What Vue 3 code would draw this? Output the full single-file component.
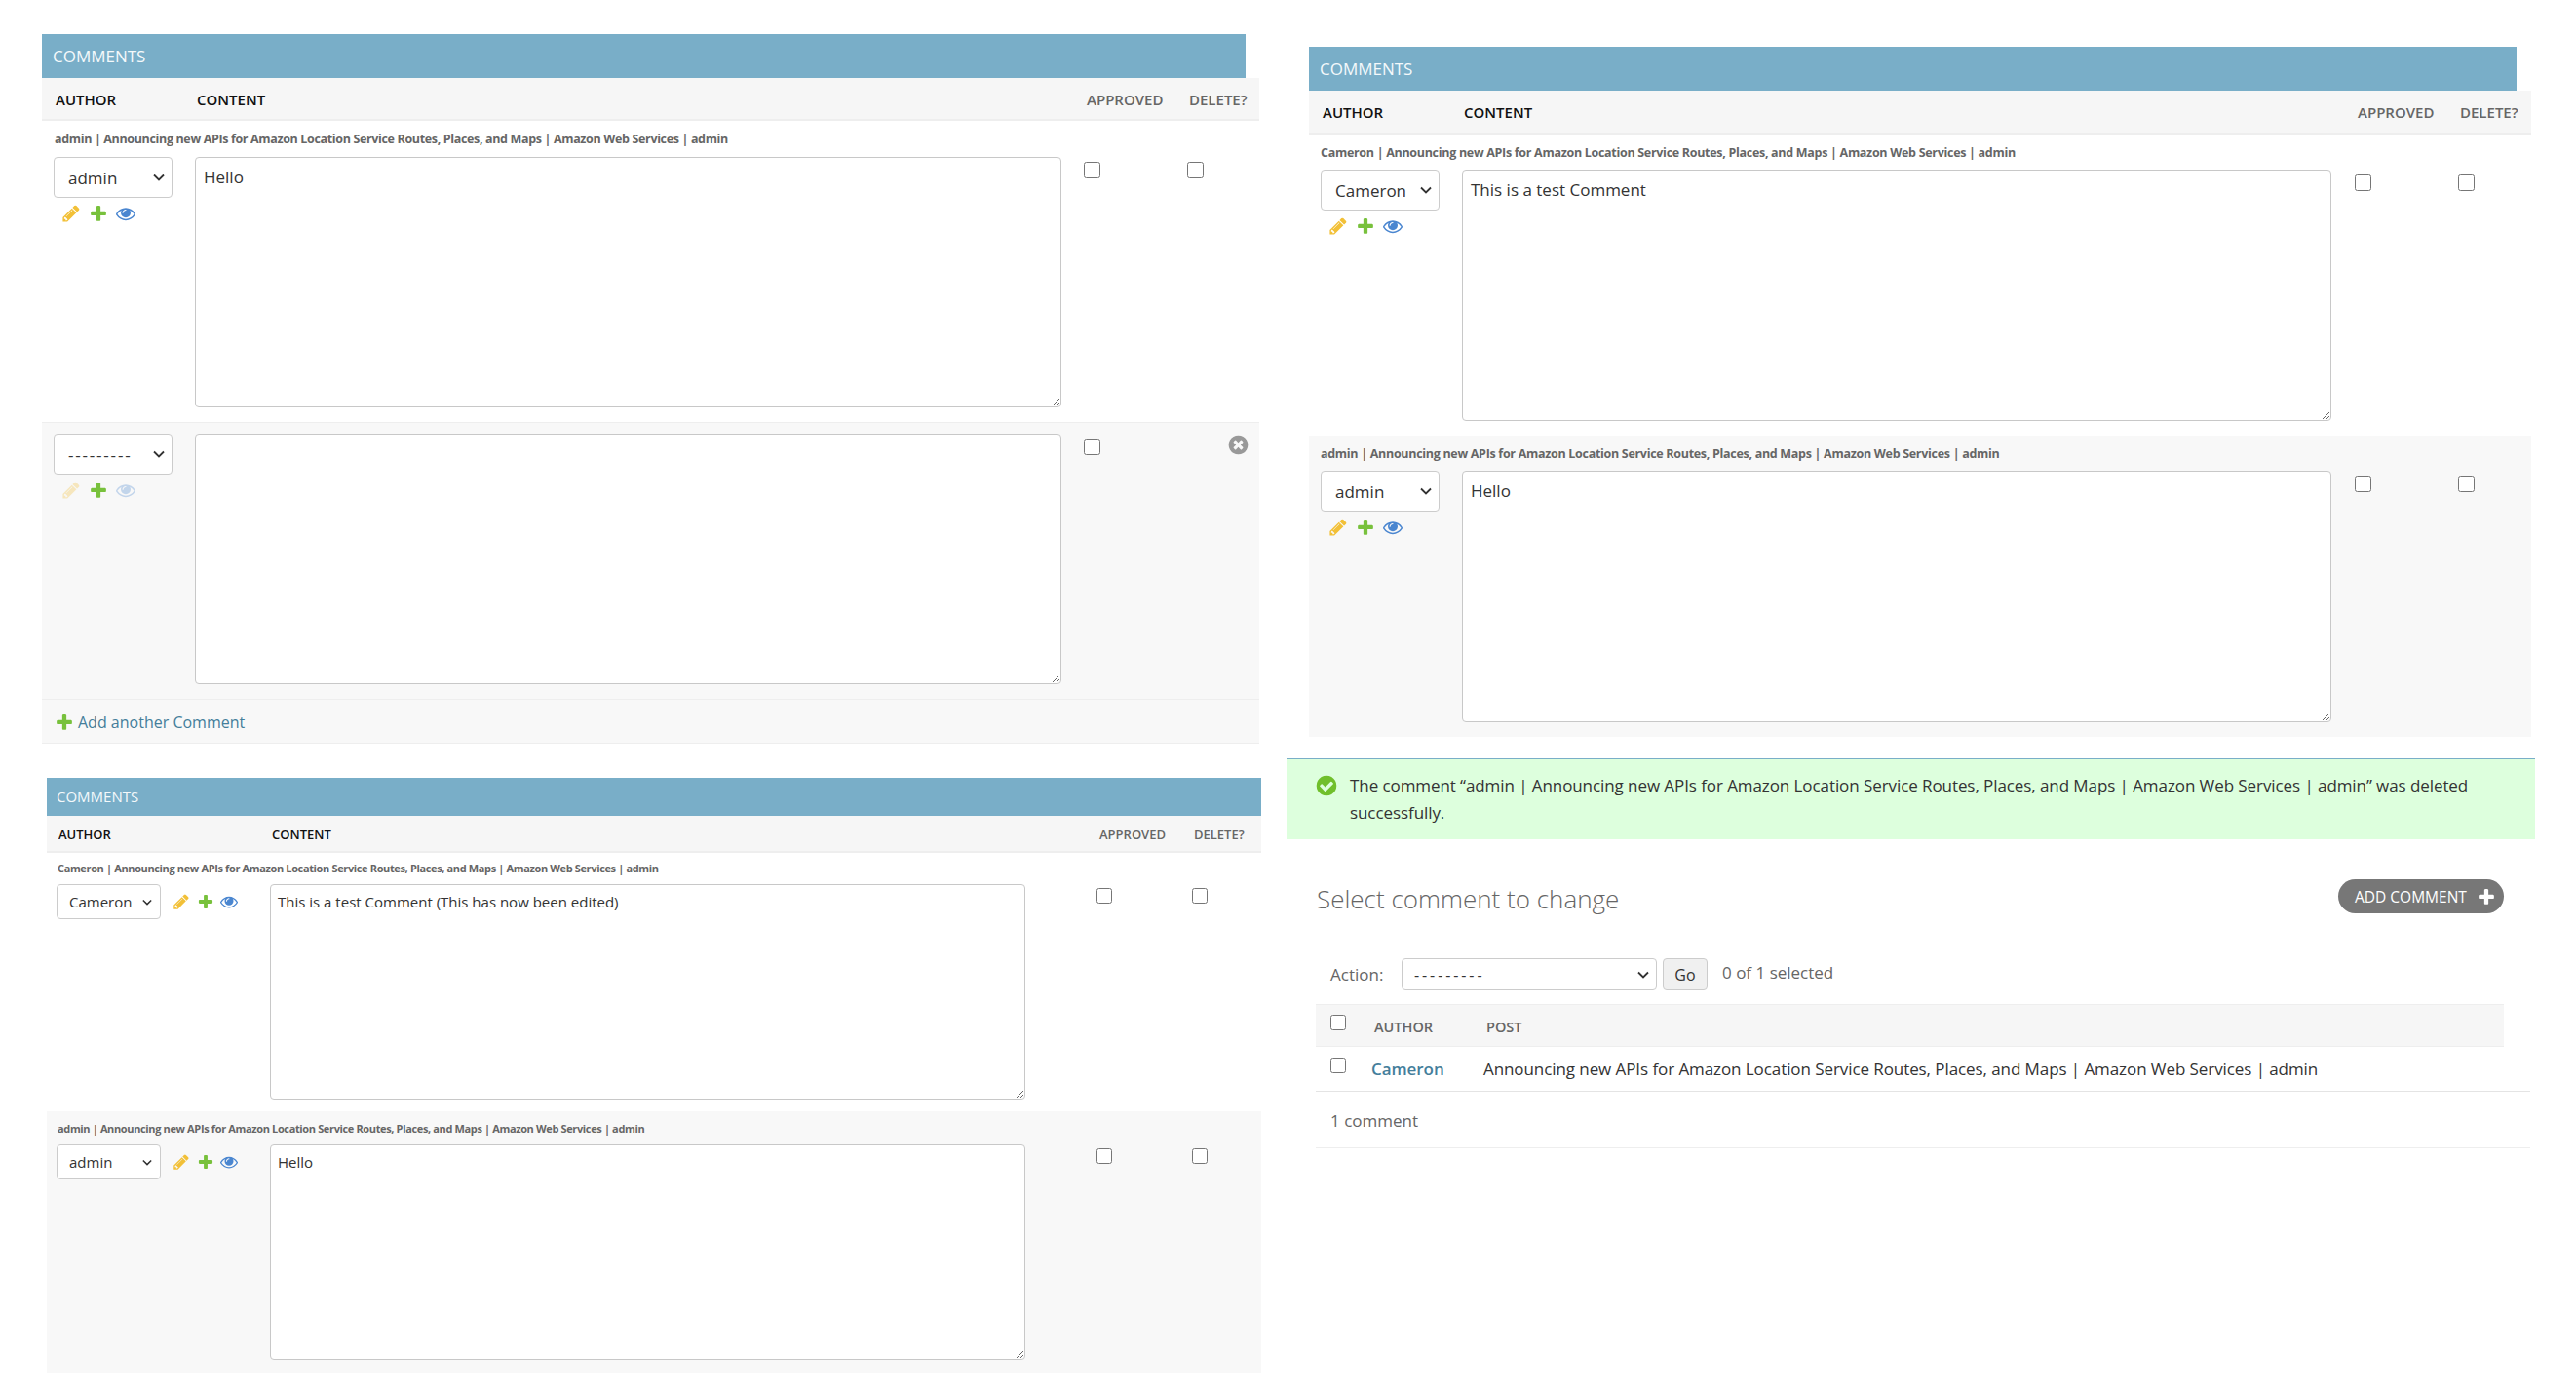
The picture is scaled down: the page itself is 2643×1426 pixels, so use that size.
<script setup>
const authors = ['---------', 'admin', 'Cameron']
const postTitle = 'Announcing new APIs for Amazon Location Service Routes, Places, and Maps | Amazon Web Services | admin'

const topLeft = {
  cls: 'panel-one',
  rows: [
    { label: 'admin | ' + postTitle, author: 'admin', text: 'Hello', cls: 'row-plain' },
    { author: '---------', text: '', cls: 'row-grey row-empty', removable: true, dim: true }
  ],
  addLink: true
}
const bottomLeft = {
  cls: 'panel-three',
  rows: [
    { label: 'Cameron | ' + postTitle, author: 'Cameron', text: 'This is a test Comment (This has now been edited)', cls: 'row-plain' },
    { label: 'admin | ' + postTitle, author: 'admin', text: 'Hello', cls: 'row-grey' }
  ]
}
const topRight = {
  cls: 'panel-two',
  rows: [
    { label: 'Cameron | ' + postTitle, author: 'Cameron', text: 'This is a test Comment', cls: 'row-plain' },
    { label: 'admin | ' + postTitle, author: 'admin', text: 'Hello', cls: 'row-grey' }
  ]
}
const leftPanels = [topLeft, bottomLeft]

const icons = {
  change: 'M491 1536l91-91-235-235-91 91v107h128v128h107zm523-928q0-22-22-22-10 0-17 7l-542 542q-7 7-7 17 0 22 22 22 10 0 17-7l542-542q7-7 7-17zm-54-192l416 416-832 832h-416v-416zm683 96q0 53-37 90l-166 166-416-416 166-165q36-38 90-38 53 0 91 38l235 234q37 39 37 91z',
  add: 'M1600 796v192q0 40-28 68t-68 28h-416v416q0 40-28 68t-68 28h-192q-40 0-68-28t-28-68v-416h-416q-40 0-68-28t-28-68v-192q0-40 28-68t68-28h416v-416q0-40 28-68t68-28h192q40 0 68 28t28 68v416h416q40 0 68 28t28 68z',
  view: 'M1664 960q-152-236-381-353 61 104 61 225 0 185-131.500 316.500t-316.500 131.500-316.500-131.500-131.500-316.500q0-121 61-225-229 117-381 353 133 205 333.500 326.500t434.500 121.500 434.500-121.500 333.500-326.500zm-720-384q0-20-14-34t-34-14q-125 0-214.500 89.500t-89.500 214.500q0 20 14 34t34 14 34-14 14-34q0-86 61-147t147-61q20 0 34-14t14-34zm848 384q0 34-20 69-140 230-376.500 368.500t-499.500 138.500-499.500-139-376.500-368q-20-35-20-69t20-69q140-229 376.500-368t499.500-139 499.500 139 376.500 368q20 35 20 69z',
  remove: 'M1277 1122q0-26-19-45l-181-181 181-181q19-19 19-45 0-27-19-46l-90-90q-19-19-46-19-26 0-45 19l-181 181-181-181q-19-19-45-19-27 0-46 19l-90 90q-19 19-19 46 0 26 19 45l181 181-181 181q-19 19-19 45 0 27 19 46l90 90q19 19 46 19 26 0 45-19l181-181 181 181q19 19 45 19 27 0 46-19l90-90q19-19 19-46zm387-226q0 209-103 385.500t-279.500 279.500-385.500 103-385.500-103-279.500-279.500-103-385.500 103-385.500 279.500-279.500 385.500-103 385.500 103 279.500 279.500 103 385.500z',
  yes: 'M1412 734q0-28-18-46l-91-90q-19-19-45-19t-45 19l-408 407-226-226q-19-19-45-19t-45 19l-91 90q-18 18-18 46 0 27 18 45l362 362q19 19 45 19 27 0 46-19l543-543q18-18 18-45zm252 162q0 209-103 385.500t-279.500 279.500-385.500 103-385.500-103-279.500-279.500-103-385.500 103-385.500 279.500-279.500 385.500-103 385.500 103 279.500 279.500 103 385.500z'
}
</script>

<template>
  <div class="page">
    <div class="col-left">
      <section v-for="panel in leftPanels" :key="panel.cls" class="panel" :class="panel.cls">
        <h2 class="panel-title">COMMENTS</h2>
        <div class="grid-row head-row">
          <span class="th th-strong">AUTHOR</span>
          <span class="th th-strong">CONTENT</span>
          <span class="th th-approved">APPROVED</span>
          <span class="th">DELETE?</span>
        </div>
        <div v-for="(row, i) in panel.rows" :key="i" class="comment-row" :class="row.cls">
          <div v-if="row.label" class="row-label">{{ row.label }}</div>
          <div class="grid-row">
            <div class="author-cell">
              <select class="author-select" :class="{ 'is-blank': row.dim }">
                <option v-for="a in authors" :key="a" :selected="a === row.author">{{ a }}</option>
              </select>
              <div class="related">
                <svg class="icon" :class="{ dim: row.dim }" viewBox="0 0 1792 1792"><path :d="icons.change" fill="#f2c037" /></svg>
                <svg class="icon" viewBox="0 0 1792 1792"><path :d="icons.add" fill="#78c13c" /></svg>
                <svg class="icon" :class="{ dim: row.dim }" viewBox="0 0 1792 1792"><path :d="icons.view" fill="#4a86d0" /></svg>
              </div>
            </div>
            <textarea class="content-box" :value="row.text"></textarea>
            <div class="check-cell check-approved"><input type="checkbox" /></div>
            <div class="check-cell">
              <svg v-if="row.removable" class="remove-icon" viewBox="0 0 1792 1792"><path :d="icons.remove" fill="#999" /></svg>
              <input v-else type="checkbox" />
            </div>
          </div>
        </div>
        <div v-if="panel.addLink" class="add-row">
          <svg class="add-icon" viewBox="0 0 1792 1792"><path :d="icons.add" fill="#78c13c" /></svg>
          <span>Add another Comment</span>
        </div>
      </section>
    </div>

    <div class="col-right">
      <section class="panel" :class="topRight.cls">
        <h2 class="panel-title">COMMENTS</h2>
        <div class="grid-row head-row">
          <span class="th th-strong">AUTHOR</span>
          <span class="th th-strong">CONTENT</span>
          <span class="th th-approved">APPROVED</span>
          <span class="th">DELETE?</span>
        </div>
        <div v-for="(row, i) in topRight.rows" :key="i" class="comment-row" :class="row.cls">
          <div class="row-label">{{ row.label }}</div>
          <div class="grid-row">
            <div class="author-cell">
              <select class="author-select">
                <option v-for="a in authors" :key="a" :selected="a === row.author">{{ a }}</option>
              </select>
              <div class="related">
                <svg class="icon" viewBox="0 0 1792 1792"><path :d="icons.change" fill="#f2c037" /></svg>
                <svg class="icon" viewBox="0 0 1792 1792"><path :d="icons.add" fill="#78c13c" /></svg>
                <svg class="icon" viewBox="0 0 1792 1792"><path :d="icons.view" fill="#4a86d0" /></svg>
              </div>
            </div>
            <textarea class="content-box" :value="row.text"></textarea>
            <div class="check-cell check-approved"><input type="checkbox" /></div>
            <div class="check-cell"><input type="checkbox" /></div>
          </div>
        </div>
      </section>

      <div class="message">
        <svg class="message-icon" viewBox="0 0 1792 1792"><path :d="icons.yes" fill="#70bf2b" /></svg>
        <p>The comment “admin | {{ postTitle }}” was deleted successfully.</p>
      </div>

      <div class="list-top">
        <h1>Select comment to change</h1>
        <a class="add-button">
          <span>ADD COMMENT</span>
          <svg viewBox="0 0 1792 1792"><path :d="icons.add" fill="#fff" /></svg>
        </a>
      </div>

      <div class="actions">
        <label>Action:</label>
        <select class="action-select"><option>---------</option></select>
        <button class="go">Go</button>
        <span class="counter">0 of 1 selected</span>
      </div>

      <div class="results">
        <div class="results-head">
          <input type="checkbox" />
          <span class="col-author">AUTHOR</span>
          <span>POST</span>
        </div>
        <div class="results-row">
          <input type="checkbox" />
          <a class="col-author">Cameron</a>
          <span>{{ postTitle }}</span>
        </div>
        <div class="paginator">1 comment</div>
      </div>
    </div>
  </div>
</template>

<style scoped>
.page {
  width: 2643px;
  height: 1426px;
  display: flex;
  background: #fff;
  color: #333;
  font-family: "Open Sans", "Noto Sans", sans-serif;
  font-size: 17px;
  overflow: hidden;
}
.col-left {
  width: 1320px;
  flex: none;
}
.col-right {
  width: 1281px;
  flex: none;
  padding-top: 48px;
}

/* inline group sizes differ per screenshot */
.panel-one {
  --author-w: 145px;
  --content-w: 889px;
  --approved-w: 129px;
  --approved-pad: 23px;
  --th-pad: 2px;
  --box-h: 257px;
  margin: 35px 0 0 43px;
  width: 1249px;
}
.panel-two {
  --author-w: 145px;
  --content-w: 892px;
  --approved-w: 130px;
  --approved-pad: 24px;
  --th-pad: 2px;
  --box-h: 258px;
  margin-left: 23px;
  width: 1254px;
}
.panel-three {
  --author-w: 219px;
  --content-w: 775px;
  --approved-w: 171px;
  --approved-pad: 73px;
  --th-pad: 2px;
  --box-h: 221px;
  margin: 35px 0 0 48px;
  width: 1246px;
}

.panel-title {
  box-sizing: border-box;
  margin: 0;
  height: 45px;
  padding-left: 11px;
  background: #79aec8;
  color: #f4f9fb;
  font-size: 17px;
  font-weight: 400;
  line-height: 45px;
}
.panel-one .panel-title { width: 1235px; }
.panel-two .panel-title { width: 1239px; }
.panel-three .panel-title {
  height: 39px;
  line-height: 39px;
  padding-left: 10px;
  font-size: 15px;
}

.grid-row {
  display: grid;
  grid-template-columns: var(--author-w) var(--content-w) var(--approved-w) 1fr;
  padding-left: 12px;
}
.head-row {
  height: 44px;
  padding-top: 1px;
  align-items: center;
  box-sizing: border-box;
  background: #f6f6f6;
  border-bottom: 2px solid #eee;
}
.panel-two .head-row {
  height: 45px;
}
.panel-three .head-row {
  height: 38px;
  padding-left: 10px;
}
.th {
  padding-left: var(--th-pad);
  color: #666;
  font-size: 15px;
  font-weight: 600;
  white-space: nowrap;
}
.th-strong {
  color: #111;
}
.th-approved {
  padding-left: calc(var(--approved-pad) + 3px);
}
.panel-three .th {
  font-size: 13px;
}

.comment-row {
  padding: 9px 0 15px;
}
.row-grey {
  background: #f8f8f8;
}
.row-empty {
  padding-top: 11px;
  border-top: 1px solid #eee;
}
.row-label {
  height: 18px;
  margin: 0 0 10px 13px;
  color: #666;
  font-size: 12.5px;
  font-weight: 700;
  letter-spacing: -0.35px;
  line-height: 19px;
  white-space: nowrap;
}
.panel-two .row-label {
  margin: 0 0 9px 12px;
  letter-spacing: -0.3px;
}
.panel-three .comment-row {
  padding: 6px 0 12px;
}
.panel-three .row-grey {
  padding: 8px 0 14px;
}
.panel-three .row-label {
  margin: 0 0 8px 11px;
  font-size: 11px;
  letter-spacing: -0.36px;
}
.panel-three .grid-row {
  padding-left: 10px;
}

.author-cell {
  min-width: 0;
}
.author-select,
.action-select {
  appearance: none;
  background: #fff url("data:image/svg+xml,%3Csvg xmlns='http://www.w3.org/2000/svg' viewBox='0 0 12 8'%3E%3Cpath d='M1 1.5l5 5 5-5' fill='none' stroke='%23333' stroke-width='1.8'/%3E%3C/svg%3E") no-repeat right 7px center / 12px 8px;
  border: 1px solid #ccc;
  border-radius: 4px;
  color: #333;
}
.author-select {
  display: block;
  width: 122px;
  height: 42px;
  padding: 0 0 0 14px;
  font: inherit;
}
.is-blank {
  letter-spacing: 1.8px;
}
.related {
  display: flex;
  gap: 8px;
  margin: 6px 0 0 8px;
}
.icon {
  width: 20px;
  height: 20px;
}
.dim {
  opacity: 0.3;
}
.panel-three .author-cell {
  display: flex;
}
.panel-three .author-select {
  width: 107px;
  height: 36px;
  padding-left: 12px;
  background-position: right 8px center;
  background-size: 10px 7px;
  font-size: 15px;
}
.panel-three .related {
  gap: 6.5px;
  margin: 9px 0 0 12px;
}
.panel-three .icon {
  width: 18px;
  height: 18px;
}

.content-box {
  display: block;
  box-sizing: border-box;
  width: 100%;
  height: var(--box-h);
  margin: 0;
  padding: 10px 8px;
  background: #fff;
  border: 1px solid #c8c8c8;
  border-radius: 4px;
  color: #333;
  font: inherit;
  line-height: 20px;
}
.panel-three .content-box {
  padding: 7px 7px;
  font-size: 15px;
}

.check-cell {
  padding-top: 5px;
}
.check-approved {
  padding-left: var(--approved-pad);
}
.check-cell input {
  display: block;
  width: 17px;
  height: 17px;
  margin: 0;
}
.panel-three .check-cell input {
  width: 16px;
  height: 16px;
}
.panel-three .check-cell {
  padding-top: 4px;
}
.remove-icon {
  display: block;
  width: 23px;
  height: 23px;
  margin: -5px 0 0 41px;
}

.add-row {
  display: flex;
  align-items: center;
  height: 46px;
  box-sizing: border-box;
  padding: 1px 0 0 13px;
  background: #f8f8f8;
  border-top: 1px solid #eee;
  border-bottom: 1px solid #eee;
  color: #447e9b;
  font-size: 16px;
}
.add-icon {
  width: 20px;
  height: 20px;
  margin-right: 4px;
}

.message {
  display: flex;
  height: 83px;
  box-sizing: border-box;
  margin-top: 22px;
  padding-left: 31px;
  background: #dfd;
  border-top: 1px solid #79aec8;
  font-size: 17px;
  line-height: 28px;
}
.message-icon {
  flex: none;
  width: 24px;
  height: 24px;
  margin: 15px 12px 0 -2px;
}
.message p {
  width: 1170px;
  margin: 13px 0 0;
  letter-spacing: -0.08px;
}

.list-top {
  display: flex;
  align-items: center;
  justify-content: space-between;
  height: 35px;
  margin: 41px 32px 0 31px;
}
.list-top h1 {
  margin: 5px 0 0;
  color: #666;
  font-size: 26px;
  font-weight: 300;
}
.add-button {
  display: flex;
  align-items: center;
  height: 35px;
  box-sizing: border-box;
  width: 170px;
  padding-left: 17px;
  background: #777;
  border-radius: 18px;
  color: #fff;
  font-size: 15.5px;
}
.add-button svg {
  width: 20px;
  height: 20px;
  margin-left: 10px;
}

.actions {
  display: flex;
  align-items: center;
  height: 33px;
  margin: 46px 0 0 45px;
}
.actions label {
  width: 73px;
  color: #666;
  font-size: 17px;
}
.action-select {
  width: 262px;
  height: 33px;
  padding-left: 12px;
  font: inherit;
  font-size: 16px;
  letter-spacing: 2.9px;
}
.go {
  width: 46px;
  height: 33px;
  margin-left: 6px;
  padding: 0;
  background: #f0f0f0;
  border: 1px solid #ccc;
  border-radius: 4px;
  color: #333;
  font: inherit;
  font-size: 16px;
}
.counter {
  margin: -4px 0 0 15px;
  color: #666;
  font-size: 17px;
}

.results {
  width: 1246px;
  margin: 14px 0 0 30px;
}
.results input {
  width: 16px;
  height: 16px;
  margin: 0;
}
.results-head {
  display: flex;
  align-items: center;
  width: 1219px;
  height: 44px;
  box-sizing: border-box;
  padding: 2px 0 0 15px;
  background: #f6f6f6;
  border-top: 1px solid #eee;
  border-bottom: 1px solid #eee;
  color: #666;
  font-size: 14.5px;
  font-weight: 600;
}
.results-head input {
  margin-top: -8px;
}
.results-head .col-author {
  width: 115px;
  margin-left: 29px;
}
.results-row {
  display: flex;
  align-items: center;
  height: 46px;
  box-sizing: border-box;
  padding-left: 15px;
  border-bottom: 1px solid #e4e4e4;
  font-size: 17px;
  letter-spacing: -0.08px;
}
.results-row input {
  margin-top: -7px;
}
.results-row .col-author {
  width: 115px;
  margin-left: 26px;
  color: #447e9b;
  font-weight: 600;
}
.paginator {
  height: 58px;
  box-sizing: border-box;
  padding: 18px 0 0 15px;
  border-bottom: 1px solid #eee;
  color: #666;
  font-size: 17px;
}
</style>
